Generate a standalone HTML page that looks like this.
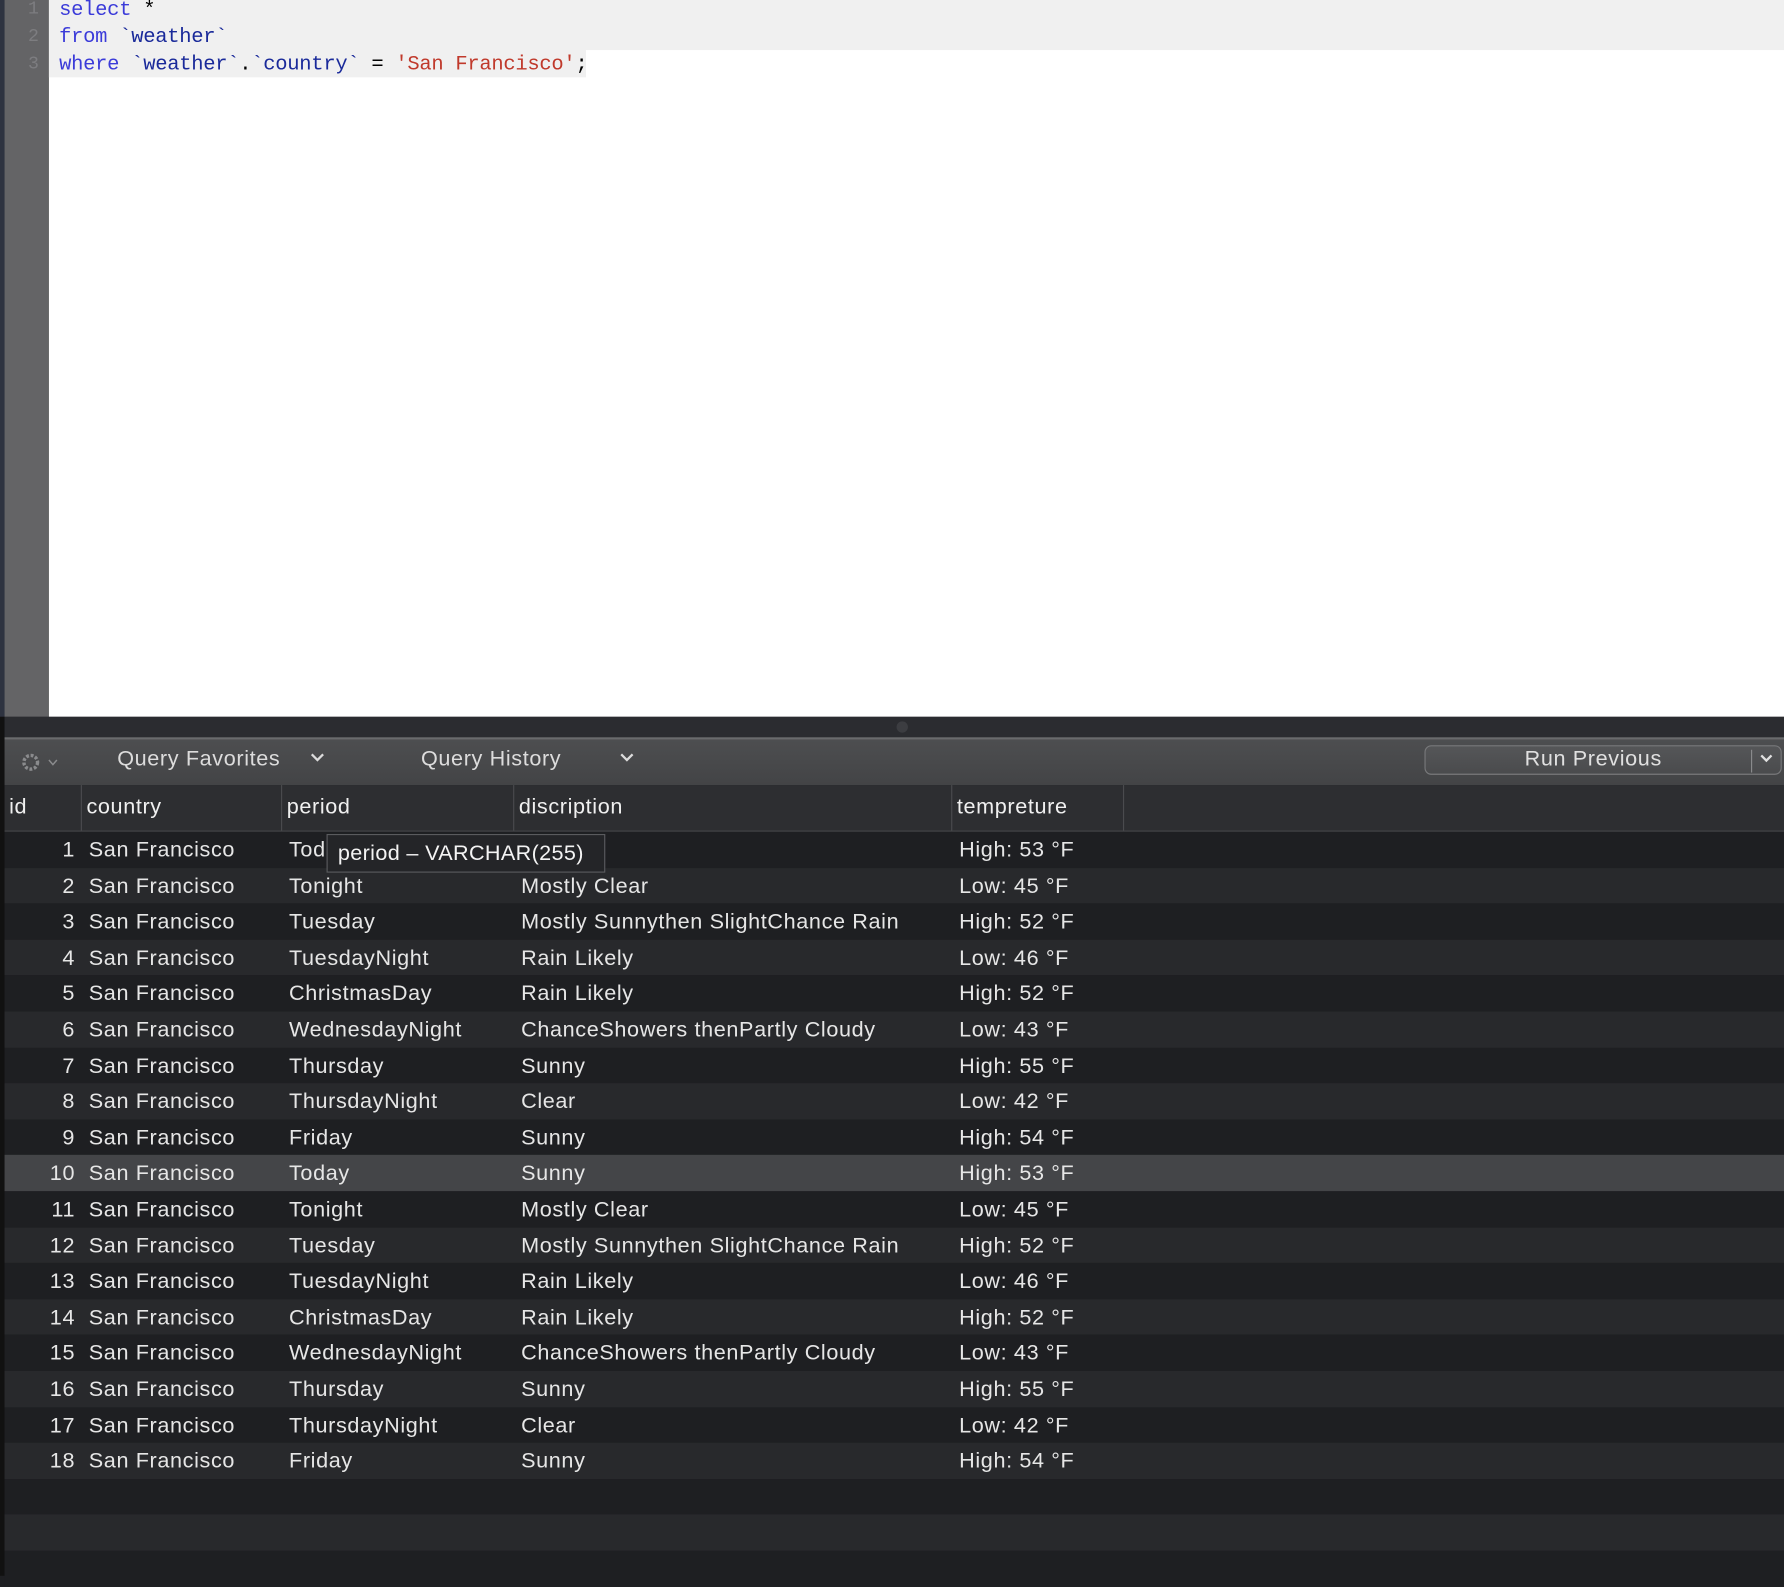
<!DOCTYPE html>
<html><head><meta charset="utf-8"><style>
html,body{margin:0;padding:0;width:1784px;height:1576px;overflow:hidden;background:#1e1f22}
#w{position:absolute;left:0;top:0;width:1568px;height:1385px;transform:scale(1.13776);transform-origin:0 0;font-family:"Liberation Sans",sans-serif;letter-spacing:0.55px}
.ab{position:absolute}
.code{font-family:"Liberation Mono",monospace;font-size:18px;line-height:24px;white-space:pre;letter-spacing:-0.25px}
.kw{color:#3b3bd9}.id{color:#1a2a9a}.st{color:#c0392b}
.row{position:absolute;left:4px;width:1564px;height:31.6px;color:#e6e6e6;font-size:19px}
.row span{position:absolute;top:6px;white-space:nowrap}
.hd{position:absolute;top:0;height:40px;border-left:1px solid #4a4b4e}
svg.cv{position:absolute}
</style></head><body><div id="w">
<div class="ab" style="left:0;top:0;width:4px;height:630px;background:#2e3340"></div>
<div class="ab" style="left:0;top:630px;width:4px;height:755px;background:#111"></div>
<div class="ab" style="left:4px;top:0;width:39px;height:630px;background:#646466"></div>
<div class="ab code" style="left:4px;top:-4px;width:30px;text-align:right;color:#7d7d80;font-size:16px;line-height:24px">1
2
3</div>
<div class="ab" style="left:43px;top:0;width:1525px;height:630px;background:#fff"></div>
<div class="ab" style="left:43px;top:0;width:1525px;height:44px;background:#f0f0f0"></div>
<div class="ab" style="left:43px;top:44px;width:472px;height:24px;background:#f0f0f0"></div>
<div class="ab code" style="left:52px;top:-3px"><span class="kw">select</span> *
<span class="kw">from</span> <span class="id">`weather`</span>
<span class="kw">where</span> <span class="id">`weather`</span>.<span class="id">`country`</span> = <span class="st">'San Francisco'</span>;</div>
<div class="ab" style="left:4px;top:630px;width:1564px;height:18px;background:#2b2c30"></div>
<div class="ab" style="left:788px;top:634px;width:10px;height:10px;border-radius:5px;background:#3c3d41"></div>
<div class="ab" style="left:4px;top:648px;width:1564px;height:2px;background:#6a6b6d"></div>
<div class="ab" style="left:4px;top:650px;width:1564px;height:40px;background:linear-gradient(#4d4e50,#434446)"></div>
<svg class="cv" style="left:17px;top:660px" width="36" height="20" viewBox="0 0 36 20"><circle cx="10" cy="10" r="6" fill="none" stroke="#8a8b8d" stroke-width="3" stroke-dasharray="2.5 1.5"/><circle cx="10" cy="10" r="2.5" fill="#4a4b4d"/><path d="M26 8 L29.5 12 L33 8" fill="none" stroke="#8a8b8d" stroke-width="1.3"/></svg>
<div class="ab" style="left:103px;top:657px;color:#dcdcdc;font-size:19px">Query Favorites</div>
<svg class="cv" style="left:272px;top:661px" width="14" height="10"><path d="M2 2 L7 7 L12 2" fill="none" stroke="#dcdcdc" stroke-width="2"/></svg>
<div class="ab" style="left:370px;top:657px;color:#dcdcdc;font-size:19px">Query History</div>
<svg class="cv" style="left:544px;top:661px" width="14" height="10"><path d="M2 2 L7 7 L12 2" fill="none" stroke="#dcdcdc" stroke-width="2"/></svg>
<div class="ab" style="left:1252px;top:655px;width:312px;height:24px;border:1.5px solid #78797b;border-radius:6px;background:linear-gradient(#555658,#4a4b4d)"></div>
<div class="ab" style="left:1340px;top:657px;color:#e0e0e0;font-size:19px">Run Previous</div>
<div class="ab" style="left:1539px;top:659px;width:1px;height:20px;background:#8a8b8d"></div>
<svg class="cv" style="left:1546px;top:662px" width="14" height="10"><path d="M2 2 L6.5 6.5 L11 2" fill="none" stroke="#e0e0e0" stroke-width="2"/></svg>
<div class="ab" style="left:4px;top:690px;width:1564px;height:40px;background:#2d2e31;color:#f0f0f0;font-size:19px">
<span class="ab" style="left:4px;top:9px">id</span>
<div class="hd" style="left:67px"></div><span class="ab" style="left:72px;top:9px">country</span>
<div class="hd" style="left:243px"></div><span class="ab" style="left:248px;top:9px">period</span>
<div class="hd" style="left:447px"></div><span class="ab" style="left:452px;top:9px">discription</span>
<div class="hd" style="left:832px"></div><span class="ab" style="left:837px;top:9px">tempreture</span>
<div class="hd" style="left:983px"></div>
</div>
<div class="ab" style="left:4px;top:730px;width:1564px;height:1px;background:#4a4b4e"></div>
<div id="rows"></div>
<div class="ab" style="left:287px;top:733px;width:243px;height:32px;background:#242528;border:1px solid #5a5b5e;color:#f4f4f4;font-size:19px;z-index:5;letter-spacing:0.3px"><span class="ab" style="left:9px;top:6px">period – VARCHAR(255)</span></div>
</div>
<script>
var d=[["Today","Sunny","High: 53 °F"],["Tonight","Mostly Clear","Low: 45 °F"],["Tuesday","Mostly Sunnythen SlightChance Rain","High: 52 °F"],["TuesdayNight","Rain Likely","Low: 46 °F"],["ChristmasDay","Rain Likely","High: 52 °F"],["WednesdayNight","ChanceShowers thenPartly Cloudy","Low: 43 °F"],["Thursday","Sunny","High: 55 °F"],["ThursdayNight","Clear","Low: 42 °F"],["Friday","Sunny","High: 54 °F"]];
var h="";
for(var i=0;i<21;i++){var t=731+i*31.6;var bg=i==9?"#444548":(i%2?"#28292c":"#1e1f22");
h+='<div class="row" style="top:'+t+'px;background:'+bg+'">';
if(i<18){var r=d[i%9];h+='<span style="right:1502px">'+(i+1)+'</span><span style="left:74px">San Francisco</span><span style="left:250px">'+r[0]+'</span><span style="left:454px">'+r[1]+'</span><span style="left:839px">'+r[2]+'</span>';}
h+='</div>';}
document.getElementById("rows").innerHTML=h;
</script>
</body></html>
